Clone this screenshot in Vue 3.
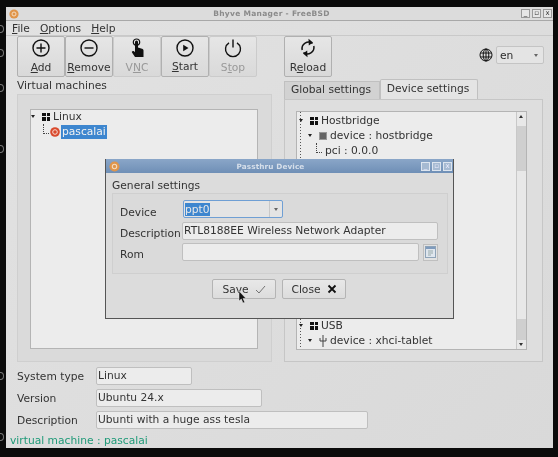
<script setup>
const tools = [
  { pre: '', u: 'A', post: 'dd', icon: 'add' },
  { pre: '', u: 'R', post: 'emove', icon: 'remove' },
  { pre: 'V', u: 'N', post: 'C', icon: 'vnc', off: true },
  { pre: '', u: 'S', post: 'tart', icon: 'start' },
  { pre: 'S', u: 't', post: 'op', icon: 'stop', off: true },
]
const edgeMarks = [25, 49, 84, 145, 372, 433]
</script>

<template>
  <div class="screen">
    <span v-for="y in edgeMarks" :key="y" class="edge" :style="{ top: y + 'px' }"></span>
    <div class="window">
      <header class="titlebar">
        <svg class="app-icon" width="10" height="10" viewBox="0 0 10 10"><circle cx="5" cy="5" r="4.6" fill="#e0954a"/><circle cx="5" cy="5" r="2" fill="none" stroke="#f5dcc0" stroke-width="1"/></svg>
        <span class="title-text">Bhyve Manager - FreeBSD</span>
        <div class="win-btns">
          <span class="win-btn">_</span><span class="win-btn">▫</span><span class="win-btn">x</span>
        </div>
      </header>
      <nav class="menubar">
        <span><u>F</u>ile</span><span><u>O</u>ptions</span><span><u>H</u>elp</span>
      </nav>
      <div class="toolbar">
        <div class="tool-group">
          <button v-for="t in tools" :key="t.icon" class="tool" :class="[t.icon, { off: t.off }]">
            <svg class="tool-icon" width="20" height="20" viewBox="0 0 20 20" fill="none" stroke="#111" stroke-width="1.4">
              <template v-if="t.icon === 'add'"><circle cx="10" cy="10" r="8"/><path d="M10 5.500v9M5.500 10h9"/></template>
              <template v-else-if="t.icon === 'remove'"><circle cx="10" cy="10" r="8"/><path d="M5.500 10h9"/></template>
              <template v-else-if="t.icon === 'vnc'"><path d="M8 11V4a1.500 1.500 0 0 1 3 0v5.500l4 1.200c1 .4 1.500 1 1.500 2V19H8L5 14.500c-.6-1.200.9-2.200 2-1.200l1 .9z" fill="#111" stroke="none"/><circle cx="9.500" cy="4.200" r="3.200" stroke-width="1.200"/></template>
              <template v-else-if="t.icon === 'start'"><circle cx="10" cy="10" r="8"/><path d="M8.200 6.800 13.500 10l-5.300 3.200z" fill="#111" stroke="none"/></template>
              <template v-else><path d="M6 4.800a7.500 7.500 0 1 0 8 0"/><path d="M10 1.500v8"/></template>
            </svg>
            <span class="tool-label">{{ t.pre }}<u>{{ t.u }}</u>{{ t.post }}</span>
          </button>
        </div>
        <button class="tool reload">
          <svg class="tool-icon" width="20" height="20" viewBox="0 0 20 20" fill="none" stroke="#111" stroke-width="1.500">
            <path d="M14.500 5.500A6.500 6.500 0 0 0 4.200 12"/><path d="M5.500 14.500A6.500 6.500 0 0 0 15.800 8"/><path d="M10.500 .8 15 4.500 10.800 7.500z" fill="#111" stroke="none"/><path d="M9.500 19.200 5 15.500l4.200-3z" fill="#111" stroke="none"/>
          </svg>
          <span class="tool-label">R<u>e</u>load</span>
        </button>
        <div class="lang">
          <svg width="14" height="14" viewBox="0 0 14 14" fill="none" stroke="#111" stroke-width="1"><circle cx="7" cy="7" r="6"/><ellipse cx="7" cy="7" rx="2.800" ry="6"/><path d="M7 1v12M1.500 5h11M1.500 9h11"/></svg>
          <div class="lang-select"><span>en</span><i class="mini-arrow"></i></div>
        </div>
      </div>

      <div class="panes">
        <section class="left-pane">
          <div class="pane-title">Virtual machines</div>
          <div class="group">
            <div class="tree left-tree">
              <div class="row"><span class="twist"><i class="mini-arrow dark"></i></span><span class="blocks"><b></b><b></b><b></b><b></b></span>Linux</div>
              <div class="row child">
                <span class="dots-l"></span>
                <svg width="10" height="10" viewBox="0 0 10 10"><circle cx="5" cy="5" r="4.800" fill="#d9492c"/><circle cx="5" cy="5" r="2.300" fill="none" stroke="#f8ddd4" stroke-width="1"/></svg>
                <span class="selected">pascalai</span>
              </div>
            </div>
          </div>
        </section>

        <section class="right-pane">
          <div class="tabs">
            <span class="tab">Global settings</span>
            <span class="tab active">Device settings</span>
          </div>
          <div class="tab-panel">
            <div class="tree right-tree">
              <div class="tree-rows">
                <div class="row hb"><span class="twist"><i class="mini-arrow dark"></i></span><span class="blocks"><b></b><b></b><b></b><b></b></span>Hostbridge</div>
                <div class="row dev"><span class="twist"><i class="mini-arrow dark"></i></span><span class="chip"></span>device : hostbridge</div>
                <div class="row pci"><span class="dots-l"></span>pci : 0.0.0</div>
                <div class="hidden-rows"></div>
                <div class="row hb"><span class="twist"><i class="mini-arrow dark"></i></span><span class="blocks"><b></b><b></b><b></b><b></b></span>USB</div>
                <div class="row dev"><span class="twist"><i class="mini-arrow dark"></i></span>
                  <svg class="usb" width="8" height="12" viewBox="0 0 8 12" fill="none" stroke="#444" stroke-width="1"><path d="M4 0v12M1 3v3h6V3"/></svg>device : xhci-tablet</div>
              </div>
              <div class="scrollbar">
                <i class="sb-up"></i>
                <div class="sb-track"><div class="sb-thumb top"></div><div class="sb-thumb bottom"></div></div>
                <i class="sb-down"></i>
              </div>
            </div>
          </div>
        </section>
      </div>

      <div class="details">
        <div class="detail"><label>System type</label><div class="field w-type">Linux</div></div>
        <div class="detail"><label>Version</label><div class="field w-ver">Ubuntu 24.x</div></div>
        <div class="detail"><label>Description</label><div class="field w-desc">Ubunti with a huge ass tesla</div></div>
      </div>
      <footer class="status">virtual machine : pascalai</footer>
    </div>

    <div class="dialog">
      <header class="dlg-title">
        <svg width="11" height="11" viewBox="0 0 10 10"><circle cx="5" cy="5" r="4.600" fill="#e0954a"/><circle cx="5" cy="5" r="2" fill="none" stroke="#f5dcc0" stroke-width="1"/></svg>
        <span class="dlg-title-text">Passthru Device</span>
        <div class="win-btns dlg-btns"><span class="win-btn">_</span><span class="win-btn">▫</span><span class="win-btn">x</span></div>
      </header>
      <div class="dlg-body">
        <div class="dlg-legend">General settings</div>
        <div class="dlg-group">
          <div class="dlg-row first"><label>Device</label><div class="combo"><span class="combo-sel">ppt0</span><span class="combo-btn"><i class="mini-arrow"></i></span></div></div>
          <div class="dlg-row"><label>Description</label><div class="field dlg-field">RTL8188EE Wireless Network Adapter</div></div>
          <div class="dlg-row"><label>Rom</label><div class="field dlg-rom"></div>
            <span class="browse"><svg width="11" height="12" viewBox="0 0 11 12"><rect x=".5" y=".5" width="10" height="11" fill="#dfe6ee" stroke="#8ea3b8"/><rect x="1" y="1" width="9" height="2" fill="#7f9bbd"/><path d="M3 5h5M3 7h5M3 9h3" stroke="#9aa" stroke-width="1"/></svg></span>
          </div>
        </div>
        <div class="dlg-actions">
          <button class="action">Save
            <svg width="11" height="9" viewBox="0 0 11 9" fill="none" stroke="#666" stroke-width=".9"><path d="M1 5l3 3 6-7"/></svg>
          </button>
          <button class="action">Close
            <svg width="10" height="10" viewBox="0 0 10 10" fill="none" stroke="#111" stroke-width="1.800"><path d="M1.500 1.500l7 7M8.500 1.500l-7 7"/></svg>
          </button>
        </div>
      </div>
      <svg class="cursor" width="9" height="13" viewBox="0 0 9 13"><path d="M1 0v10l2.300-2 1.700 4 1.800-.8L5 7.500h3z" fill="#111" stroke="#eee" stroke-width=".5"/></svg>
    </div>
  </div>
</template>

<style scoped>
.screen {
  position: relative;
  width: 558px;
  height: 457px;
  background: #0b0b0b;
  box-sizing: border-box;
  padding: 7px 5px 9px 6px;
  overflow: hidden;
  font-family: "DejaVu Sans", sans-serif;
  font-size: 10.700px;
  color: #2a2a2a;
  filter: blur(0.4px);
}
.edge {
  position: absolute;
  left: -3px;
  width: 5px;
  height: 6px;
  border: 1px solid #777;
  border-radius: 50%;
}
.window {
  height: 100%;
  background: linear-gradient(135deg, #e2e2e2, #d9d9d9);
  display: flex;
  flex-direction: column;
}
.titlebar {
  height: 13px;
  flex: none;
  display: flex;
  align-items: center;
  position: relative;
  background: #dcdcdc;
  border-bottom: 1px solid #a8a8a8;
  padding-left: 3px;
}
.title-text {
  flex: 1;
  text-align: center;
  font-size: 7.500px;
  font-weight: bold;
  color: #8a8a8a;
  letter-spacing: .3px;
  padding-left: 3px;
}
.win-btns { display: flex; gap: 2px; padding-right: 1px; }
.win-btn {
  width: 9px;
  height: 9px;
  box-sizing: border-box;
  border: 1px solid #999;
  font-size: 7px;
  line-height: 6px;
  text-align: center;
  color: #333;
  background: #e6e6e6;
}
.menubar {
  height: 14px;
  flex: none;
  display: flex;
  gap: 10px;
  align-items: center;
  padding: 0 0 0 6px;
  border-bottom: 1px solid #c9c9c9;
  color: #333;
}
.toolbar {
  height: 43px;
  flex: none;
  display: flex;
  padding-left: 11px;
}
.tool-group { display: flex; }
.tool {
  width: 48px;
  height: 41px;
  box-sizing: border-box;
  padding: 0;
  border: 1px solid #b0b0b0;
  border-radius: 2px;
  background: linear-gradient(#e6e6e6, #d9d9d9);
  display: flex;
  flex-direction: column;
  align-items: center;
  font: inherit;
  color: #333;
}
.tool.off { color: #999; border-color: #cbcbcb; }
.tool-icon { margin-top: 1px; flex: none; }
.tool-label { margin-top: 3px; line-height: 14px; }
.tool.start .tool-label { margin-top: 2px; }
.reload { margin-left: 27px; }
.lang {
  margin-left: auto;
  margin-right: 9px;
  display: flex;
  align-items: center;
  gap: 3px;
  height: 18px;
  margin-top: 10px;
}
.lang-select {
  width: 48px;
  height: 18px;
  box-sizing: border-box;
  border: 1px solid #c4c4c4;
  border-radius: 2px;
  background: #e4e4e4;
  display: flex;
  align-items: center;
  justify-content: space-between;
  padding: 0 5px 0 3px;
}
.mini-arrow {
  width: 0;
  height: 0;
  border-left: 2.500px solid transparent;
  border-right: 2.500px solid transparent;
  border-top: 3px solid #666;
  display: block;
}
.mini-arrow.dark { border-top-color: #222; }

.panes {
  flex: none;
  display: flex;
  gap: 12px;
  height: 283px;
  padding-left: 11px;
}
.left-pane { width: 255px; display: flex; flex-direction: column; }
.pane-title { height: 15px; line-height: 14px; color: #333; }
.group {
  flex: 1;
  border: 1px solid #cfcfcf;
  background: #dadada;
  padding: 14px 13px 12px 12px;
  display: flex;
}
.tree {
  flex: 1;
  border: 1px solid #b4b4b4;
  background: #ececec;
  display: flex;
}
.left-tree { flex-direction: column; }
.left-tree .row:first-child { margin-top: -1px; }
.row {
  height: 15px;
  display: flex;
  align-items: center;
  white-space: nowrap;
  color: #333;
  gap: 3px;
}
.twist { width: 8px; display: flex; justify-content: flex-start; flex: none; }
.blocks {
  width: 8px;
  height: 8px;
  display: grid;
  grid-template-columns: 1fr 1fr;
  gap: 1px;
  flex: none;
}
.blocks b { background: #111; }
.child { padding-left: 12px; gap: 1px; }
.dots-l {
  width: 5px;
  height: 9px;
  margin-top: -6px;
  border-left: 1px dotted #444;
  border-bottom: 1px dotted #444;
  flex: none;
}
.selected {
  background: #3d86cf;
  color: #f2f2f2;
  padding: 0 1px;
  line-height: 14px;
}
.right-pane { width: 259px; display: flex; flex-direction: column; }
.tabs { height: 20px; display: flex; align-items: flex-end; flex: none; }
.tab {
  width: 96px;
  height: 18px;
  box-sizing: border-box;
  line-height: 15px;
  padding-right: 2px;
  text-align: center;
  background: #d2d2d2;
  border: 1px solid #c0c0c0;
  border-bottom: 0;
  color: #333;
}
.tab.active {
  width: 98px;
  height: 20px;
  line-height: 17px;
  background: #e4e4e4;
  border-radius: 2px 2px 0 0;
}
.tab-panel {
  flex: 1;
  border: 1px solid #c6c6c6;
  background: #dedede;
  padding: 11px 15px 11px 11px;
  display: flex;
}
.tree-rows {
  flex: 1;
  padding: 1px 0 1px 2px;
  display: flex;
  flex-direction: column;
  background-image: linear-gradient(#555 50%, transparent 50%);
  background-size: 1px 3px;
  background-repeat: repeat-y;
  background-position: 3px 0;
}
.hb { padding-left: 0; }
.dev { padding-left: 9px; }
.pci { padding-left: 17px; gap: 3px; }
.hidden-rows { flex: 1; }
.chip { width: 8px; height: 8px; background: #666; border: 1px solid #999; box-sizing: border-box; flex: none; }
.usb { flex: none; }
.scrollbar {
  width: 9px;
  flex: none;
  border-left: 1px solid #c8c8c8;
  display: flex;
  flex-direction: column;
  background: #e8e8e8;
}
.sb-up, .sb-down { height: 9px; width: 100%; position: relative; flex: none; }
.sb-up::after, .sb-down::after {
  content: "";
  position: absolute;
  left: 2px;
  top: 3px;
  border-left: 2.500px solid transparent;
  border-right: 2.500px solid transparent;
}
.sb-up::after { border-bottom: 3px solid #333; }
.sb-down::after { border-top: 3px solid #333; }
.sb-track { flex: 1; display: flex; flex-direction: column; justify-content: space-between; padding-top: 5px; }
.sb-thumb { background: #cfcfcf; }
.sb-thumb.top { height: 45px; }
.sb-thumb.bottom { height: 21px; }

.details { flex: none; padding: 5px 0 0 11px; display: flex; flex-direction: column; gap: 4px; }
.detail { display: flex; align-items: center; }
.detail label { width: 79px; flex: none; color: #333; }
.field {
  height: 18px;
  box-sizing: border-box;
  border: 1px solid #bfbfbf;
  border-radius: 2px;
  background: #ececec;
  line-height: 16px;
  padding-left: 1px;
  color: #333;
  white-space: nowrap;
}
.w-type { width: 96px; }
.w-ver { width: 166px; }
.w-desc { width: 272px; }
.status {
  margin-top: 5px;
  padding-left: 4px;
  color: #1f9a78;
  line-height: 14px;
}

.dialog {
  position: absolute;
  left: 105px;
  top: 159px;
  width: 349px;
  height: 160px;
  box-sizing: border-box;
  border: 1px solid #555;
  border-top: 0;
  background: #dcdcdc;
  display: flex;
  flex-direction: column;
}
.dlg-title {
  height: 14px;
  flex: none;
  display: flex;
  align-items: center;
  padding-left: 3px;
  background: linear-gradient(#8aa6c8, #6f8fb6);
}
.dlg-title-text {
  flex: 1;
  text-align: center;
  font-size: 7.300px;
  font-weight: bold;
  color: #d6dfea;
  letter-spacing: .1px;
}
.dlg-btns .win-btn { background: #a6bad2; border-color: #dde5ef; color: #eef; }
.dlg-body { flex: 1; padding: 5px 5px 0 6px; display: flex; flex-direction: column; }
.dlg-legend { height: 15px; line-height: 16px; color: #333; }
.dlg-group {
  height: 81px;
  box-sizing: border-box;
  border: 1px solid #cfcfcf;
  background: #dadada;
  padding: 6px 8px 0 7px;
  display: flex;
  flex-direction: column;
  gap: 3px;
}
.dlg-row { display: flex; align-items: center; height: 18px; }
.dlg-row.first { margin-bottom: 1px; }
.dlg-row label { width: 62px; flex: none; color: #333; padding-top: 4px; }
.dlg-row.first label { padding-top: 6px; }
.combo {
  width: 100px;
  height: 18px;
  box-sizing: border-box;
  border: 1px solid #6f9fd4;
  border-radius: 2px;
  background: #e4e4e4;
  display: flex;
  align-items: center;
  margin-left: 1px;
}
.combo-sel { flex: 1; padding-left: 1px; color: #e8e8e8; }
.combo-sel::first-line { background: #3d86cf; }
.combo-btn { width: 12px; display: flex; justify-content: center; border-left: 1px solid #c8c8c8; height: 100%; align-items: center; }
.dlg-field { width: 256px; }
.dlg-rom { width: 237px; }
.browse {
  width: 15px;
  height: 17px;
  margin-left: 4px;
  box-sizing: border-box;
  border: 1px solid #bfbfbf;
  display: flex;
  align-items: center;
  justify-content: center;
  background: #e2e2e2;
}
.dlg-actions {
  display: flex;
  justify-content: center;
  gap: 6px;
  margin-top: 5px;
  padding-right: 2px;
}
.action {
  width: 64px;
  height: 20px;
  padding: 0;
  box-sizing: border-box;
  border: 1px solid #b4b4b4;
  border-radius: 2px;
  background: linear-gradient(#e8e8e8, #dcdcdc);
  font: inherit;
  color: #333;
  display: flex;
  align-items: center;
  justify-content: center;
  gap: 6px;
}
.cursor { position: absolute; left: 132px; top: 132px; }
</style>
